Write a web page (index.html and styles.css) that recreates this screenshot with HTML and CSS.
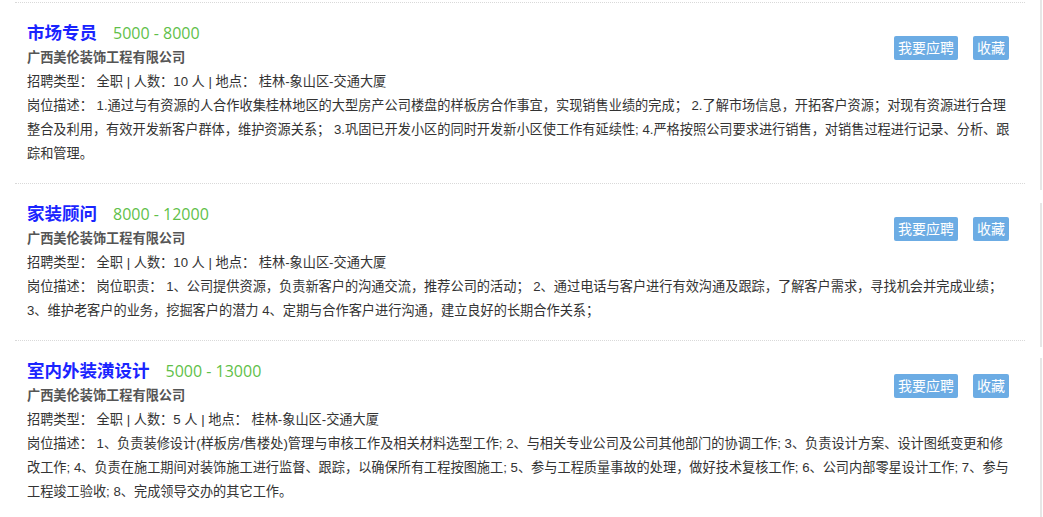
FILE: index.html
```html
<!DOCTYPE html>
<html lang="zh-CN">
<head>
<meta charset="utf-8">
<title>招聘职位</title>
<link rel="stylesheet" href="styles.css">
</head>
<body>
<div class="page">
  <div class="list">
    <div class="job">
      <div class="job-head">
        <div class="job-main">
          <div class="job-title"><span class="name">市场专员</span><span class="salary">5000 - 8000</span></div>
          <div class="company">广西美伦装饰工程有限公司</div>
        </div>
        <div class="actions">
          <span class="btn">我要应聘</span>
          <span class="btn">收藏</span>
        </div>
      </div>
      <div class="meta">招聘类型： 全职 | 人数：10 人 | 地点： 桂林-象山区-交通大厦</div>
      <div class="desc">岗位描述： 1.通过与有资源的人合作收集桂林地区的大型房产公司楼盘的样板房合作事宜，实现销售业绩的完成； 2.了解市场信息，开拓客户资源；对现有资源进行合理整合及利用，有效开发新客户群体，维护资源关系； 3.巩固已开发小区的同时开发新小区使工作有延续性; 4.严格按照公司要求进行销售，对销售过程进行记录、分析、跟踪和管理。</div>
    </div>
    <div class="job">
      <div class="job-head">
        <div class="job-main">
          <div class="job-title"><span class="name">家装顾问</span><span class="salary">8000 - 12000</span></div>
          <div class="company">广西美伦装饰工程有限公司</div>
        </div>
        <div class="actions">
          <span class="btn">我要应聘</span>
          <span class="btn">收藏</span>
        </div>
      </div>
      <div class="meta">招聘类型： 全职 | 人数：10 人 | 地点： 桂林-象山区-交通大厦</div>
      <div class="desc">岗位描述： 岗位职责： 1、公司提供资源，负责新客户的沟通交流，推荐公司的活动； 2、通过电话与客户进行有效沟通及跟踪，了解客户需求，寻找机会并完成业绩； 3、维护老客户的业务，挖掘客户的潜力 4、定期与合作客户进行沟通，建立良好的长期合作关系；</div>
    </div>
    <div class="job">
      <div class="job-head">
        <div class="job-main">
          <div class="job-title"><span class="name">室内外装潢设计</span><span class="salary">5000 - 13000</span></div>
          <div class="company">广西美伦装饰工程有限公司</div>
        </div>
        <div class="actions">
          <span class="btn">我要应聘</span>
          <span class="btn">收藏</span>
        </div>
      </div>
      <div class="meta">招聘类型： 全职 | 人数：5 人 | 地点： 桂林-象山区-交通大厦</div>
      <div class="desc">岗位描述： 1、负责装修设计(样板房/售楼处)管理与审核工作及相关材料选型工作; 2、与相关专业公司及公司其他部门的协调工作; 3、负责设计方案、设计图纸变更和修改工作; 4、负责在施工期间对装饰施工进行监督、跟踪，以确保所有工程按图施工; 5、参与工程质量事故的处理，做好技术复核工作; 6、公司内部零星设计工作; 7、参与工程竣工验收; 8、完成领导交办的其它工作。</div>
    </div>
  </div>
  <div class="rail">
    <div class="seg seg1"></div>
    <div class="seg seg2"></div>
    <div class="seg seg3"></div>
  </div>
</div>
</body>
</html>
```
FILE: styles.css
```css
html, body {
  margin: 0;
  padding: 0;
  background: #fff;
}
body {
  font-family: "Liberation Sans", "Noto Sans CJK SC", sans-serif;
  color: #333;
  font-size: 13.2px;
  overflow: hidden;
  height: 517px;
}
.page {
  display: flex;
  height: 517px;
}
.list {
  width: 1010px;
  margin-left: 15px;
  margin-top: 2px;
}
.job {
  border-top: 1px dotted #d9d9d9;
  padding: 17px 12px 17px 12px;
}
.job-head {
  display: flex;
  justify-content: space-between;
  align-items: flex-start;
}
.job-title {
  height: 26px;
  line-height: 26px;
  display: flex;
  align-items: baseline;
}
.name {
  font-size: 17.5px;
  font-weight: bold;
  color: #1a24ff;
}
.salary {
  font-family: "Open Sans", "Noto Sans CJK SC", sans-serif;
  font-size: 16px;
  color: #5fbf4a;
  margin-left: 16px;
}
.company {
  line-height: 24px;
  font-weight: bold;
  color: #555;
}
.actions {
  display: flex;
  gap: 15px;
  margin-top: 16px;
  margin-right: 4px;
}
.btn {
  display: block;
  height: 24px;
  line-height: 24px;
  padding: 0 4px;
  background: #6cace4;
  color: #fff;
  font-size: 14px;
  border-radius: 2px;
}
.meta {
  line-height: 24px;
}
.desc {
  line-height: 24px;
}
.rail {
  margin-left: auto;
  margin-right: 1px;
  width: 2px;
  display: flex;
  flex-direction: column;
}
.seg {
  background: #e6e6e6;
}
.seg1 {
  height: 190px;
}
.seg2 {
  margin-top: 13px;
  height: 144px;
}
.seg3 {
  margin-top: 11px;
  flex: 1;
}
```
